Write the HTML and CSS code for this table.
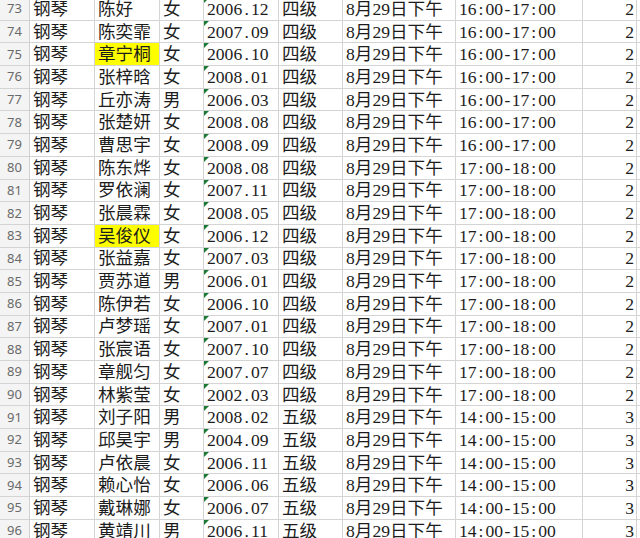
FILE: index.html
```html
<!DOCTYPE html>
<html lang="zh-CN">
<head>
<meta charset="utf-8">
<title>钢琴考级安排</title>
<link rel="stylesheet" href="styles.css">
</head>
<body>
<div class="sheet">
  <div class="row"><div class="hdr">73</div><div class="c">钢琴</div><div class="c">陈好</div><div class="c">女</div><div class="c d">2006<span class="p">.</span>12</div><div class="c">四级</div><div class="c">8月29日下午</div><div class="c">16<span class="p">:</span>00<span class="p">-</span>17<span class="p">:</span>00</div><div class="c n">2</div><div class="c e"></div></div>
  <div class="row"><div class="hdr">74</div><div class="c">钢琴</div><div class="c">陈奕霏</div><div class="c">女</div><div class="c d">2007<span class="p">.</span>09</div><div class="c">四级</div><div class="c">8月29日下午</div><div class="c">16<span class="p">:</span>00<span class="p">-</span>17<span class="p">:</span>00</div><div class="c n">2</div><div class="c e"></div></div>
  <div class="row"><div class="hdr">75</div><div class="c">钢琴</div><div class="c hl">章宁桐</div><div class="c">女</div><div class="c d">2006<span class="p">.</span>10</div><div class="c">四级</div><div class="c">8月29日下午</div><div class="c">16<span class="p">:</span>00<span class="p">-</span>17<span class="p">:</span>00</div><div class="c n">2</div><div class="c e"></div></div>
  <div class="row"><div class="hdr">76</div><div class="c">钢琴</div><div class="c">张梓晗</div><div class="c">女</div><div class="c d">2008<span class="p">.</span>01</div><div class="c">四级</div><div class="c">8月29日下午</div><div class="c">16<span class="p">:</span>00<span class="p">-</span>17<span class="p">:</span>00</div><div class="c n">2</div><div class="c e"></div></div>
  <div class="row"><div class="hdr">77</div><div class="c">钢琴</div><div class="c">丘亦涛</div><div class="c">男</div><div class="c d">2006<span class="p">.</span>03</div><div class="c">四级</div><div class="c">8月29日下午</div><div class="c">16<span class="p">:</span>00<span class="p">-</span>17<span class="p">:</span>00</div><div class="c n">2</div><div class="c e"></div></div>
  <div class="row"><div class="hdr">78</div><div class="c">钢琴</div><div class="c">张楚妍</div><div class="c">女</div><div class="c d">2008<span class="p">.</span>08</div><div class="c">四级</div><div class="c">8月29日下午</div><div class="c">16<span class="p">:</span>00<span class="p">-</span>17<span class="p">:</span>00</div><div class="c n">2</div><div class="c e"></div></div>
  <div class="row"><div class="hdr">79</div><div class="c">钢琴</div><div class="c">曹思宇</div><div class="c">女</div><div class="c d">2008<span class="p">.</span>09</div><div class="c">四级</div><div class="c">8月29日下午</div><div class="c">16<span class="p">:</span>00<span class="p">-</span>17<span class="p">:</span>00</div><div class="c n">2</div><div class="c e"></div></div>
  <div class="row"><div class="hdr">80</div><div class="c">钢琴</div><div class="c">陈东烨</div><div class="c">女</div><div class="c d">2008<span class="p">.</span>08</div><div class="c">四级</div><div class="c">8月29日下午</div><div class="c">17<span class="p">:</span>00<span class="p">-</span>18<span class="p">:</span>00</div><div class="c n">2</div><div class="c e"></div></div>
  <div class="row"><div class="hdr">81</div><div class="c">钢琴</div><div class="c">罗依澜</div><div class="c">女</div><div class="c d">2007<span class="p">.</span>11</div><div class="c">四级</div><div class="c">8月29日下午</div><div class="c">17<span class="p">:</span>00<span class="p">-</span>18<span class="p">:</span>00</div><div class="c n">2</div><div class="c e"></div></div>
  <div class="row"><div class="hdr">82</div><div class="c">钢琴</div><div class="c">张晨霖</div><div class="c">女</div><div class="c d">2008<span class="p">.</span>05</div><div class="c">四级</div><div class="c">8月29日下午</div><div class="c">17<span class="p">:</span>00<span class="p">-</span>18<span class="p">:</span>00</div><div class="c n">2</div><div class="c e"></div></div>
  <div class="row"><div class="hdr">83</div><div class="c">钢琴</div><div class="c hl">吴俊仪</div><div class="c">女</div><div class="c d">2006<span class="p">.</span>12</div><div class="c">四级</div><div class="c">8月29日下午</div><div class="c">17<span class="p">:</span>00<span class="p">-</span>18<span class="p">:</span>00</div><div class="c n">2</div><div class="c e"></div></div>
  <div class="row"><div class="hdr">84</div><div class="c">钢琴</div><div class="c">张益嘉</div><div class="c">女</div><div class="c d">2007<span class="p">.</span>03</div><div class="c">四级</div><div class="c">8月29日下午</div><div class="c">17<span class="p">:</span>00<span class="p">-</span>18<span class="p">:</span>00</div><div class="c n">2</div><div class="c e"></div></div>
  <div class="row"><div class="hdr">85</div><div class="c">钢琴</div><div class="c">贾苏道</div><div class="c">男</div><div class="c d">2006<span class="p">.</span>01</div><div class="c">四级</div><div class="c">8月29日下午</div><div class="c">17<span class="p">:</span>00<span class="p">-</span>18<span class="p">:</span>00</div><div class="c n">2</div><div class="c e"></div></div>
  <div class="row"><div class="hdr">86</div><div class="c">钢琴</div><div class="c">陈伊若</div><div class="c">女</div><div class="c d">2006<span class="p">.</span>10</div><div class="c">四级</div><div class="c">8月29日下午</div><div class="c">17<span class="p">:</span>00<span class="p">-</span>18<span class="p">:</span>00</div><div class="c n">2</div><div class="c e"></div></div>
  <div class="row"><div class="hdr">87</div><div class="c">钢琴</div><div class="c">卢梦瑶</div><div class="c">女</div><div class="c d">2007<span class="p">.</span>01</div><div class="c">四级</div><div class="c">8月29日下午</div><div class="c">17<span class="p">:</span>00<span class="p">-</span>18<span class="p">:</span>00</div><div class="c n">2</div><div class="c e"></div></div>
  <div class="row"><div class="hdr">88</div><div class="c">钢琴</div><div class="c">张宸语</div><div class="c">女</div><div class="c d">2007<span class="p">.</span>10</div><div class="c">四级</div><div class="c">8月29日下午</div><div class="c">17<span class="p">:</span>00<span class="p">-</span>18<span class="p">:</span>00</div><div class="c n">2</div><div class="c e"></div></div>
  <div class="row"><div class="hdr">89</div><div class="c">钢琴</div><div class="c">章舰匀</div><div class="c">女</div><div class="c d">2007<span class="p">.</span>07</div><div class="c">四级</div><div class="c">8月29日下午</div><div class="c">17<span class="p">:</span>00<span class="p">-</span>18<span class="p">:</span>00</div><div class="c n">2</div><div class="c e"></div></div>
  <div class="row"><div class="hdr">90</div><div class="c">钢琴</div><div class="c">林紫莹</div><div class="c">女</div><div class="c d">2002<span class="p">.</span>03</div><div class="c">四级</div><div class="c">8月29日下午</div><div class="c">17<span class="p">:</span>00<span class="p">-</span>18<span class="p">:</span>00</div><div class="c n">2</div><div class="c e"></div></div>
  <div class="row"><div class="hdr">91</div><div class="c">钢琴</div><div class="c">刘子阳</div><div class="c">男</div><div class="c d">2008<span class="p">.</span>02</div><div class="c">五级</div><div class="c">8月29日下午</div><div class="c">14<span class="p">:</span>00<span class="p">-</span>15<span class="p">:</span>00</div><div class="c n">3</div><div class="c e"></div></div>
  <div class="row"><div class="hdr">92</div><div class="c">钢琴</div><div class="c">邱昊宇</div><div class="c">男</div><div class="c d">2004<span class="p">.</span>09</div><div class="c">五级</div><div class="c">8月29日下午</div><div class="c">14<span class="p">:</span>00<span class="p">-</span>15<span class="p">:</span>00</div><div class="c n">3</div><div class="c e"></div></div>
  <div class="row"><div class="hdr">93</div><div class="c">钢琴</div><div class="c">卢依晨</div><div class="c">女</div><div class="c d">2006<span class="p">.</span>11</div><div class="c">五级</div><div class="c">8月29日下午</div><div class="c">14<span class="p">:</span>00<span class="p">-</span>15<span class="p">:</span>00</div><div class="c n">3</div><div class="c e"></div></div>
  <div class="row"><div class="hdr">94</div><div class="c">钢琴</div><div class="c">赖心怡</div><div class="c">女</div><div class="c d">2006<span class="p">.</span>06</div><div class="c">五级</div><div class="c">8月29日下午</div><div class="c">14<span class="p">:</span>00<span class="p">-</span>15<span class="p">:</span>00</div><div class="c n">3</div><div class="c e"></div></div>
  <div class="row"><div class="hdr">95</div><div class="c">钢琴</div><div class="c">戴琳娜</div><div class="c">女</div><div class="c d">2006<span class="p">.</span>07</div><div class="c">五级</div><div class="c">8月29日下午</div><div class="c">14<span class="p">:</span>00<span class="p">-</span>15<span class="p">:</span>00</div><div class="c n">3</div><div class="c e"></div></div>
  <div class="row"><div class="hdr">96</div><div class="c">钢琴</div><div class="c">黄靖川</div><div class="c">男</div><div class="c d">2006<span class="p">.</span>11</div><div class="c">五级</div><div class="c">8月29日下午</div><div class="c">14<span class="p">:</span>00<span class="p">-</span>15<span class="p">:</span>00</div><div class="c n">3</div><div class="c e"></div></div>
</div>
</body>
</html>
```
FILE: styles.css
```css
html, body {
  margin: 0;
  padding: 0;
  background: #ffffff;
  overflow: hidden;
}

.sheet {
  margin-top: -2px;
  width: 640px;
}

.row {
  display: grid;
  grid-template-columns: 30px 65px 65px 44px 75px 64px 113px 127px 54px 1fr;
  height: 22.7px;
}

.hdr,
.c {
  box-sizing: border-box;
  border-right: 1px solid #d4d4d4;
  border-bottom: 1px solid #d4d4d4;
  display: flex;
  align-items: center;
  white-space: nowrap;
}

.hdr {
  background: #f4f4f4;
  justify-content: center;
  font-family: "Noto Sans", "Liberation Sans", sans-serif;
  font-size: 13px;
  line-height: 1;
  color: #6a6a6a;
  border-right-color: #cfcfcf;
}

.c {
  position: relative;
  padding-left: 3px;
  font-family: "Liberation Serif", "Noto Sans CJK SC", serif;
  font-size: 17.6px;
  line-height: 18px;
  color: #1c1c1c;
}

.p {
  display: inline-block;
  width: 0.5em;
  text-align: center;
}

.n {
  justify-content: flex-end;
  padding-left: 0;
  padding-right: 2px;
}

.e {
  border-right: none;
}

.hl {
  background: #ffff00;
}

.d::before {
  content: "";
  position: absolute;
  left: 0;
  top: 0;
  border-top: 5px solid #1d7a36;
  border-right: 5px solid transparent;
}
```
